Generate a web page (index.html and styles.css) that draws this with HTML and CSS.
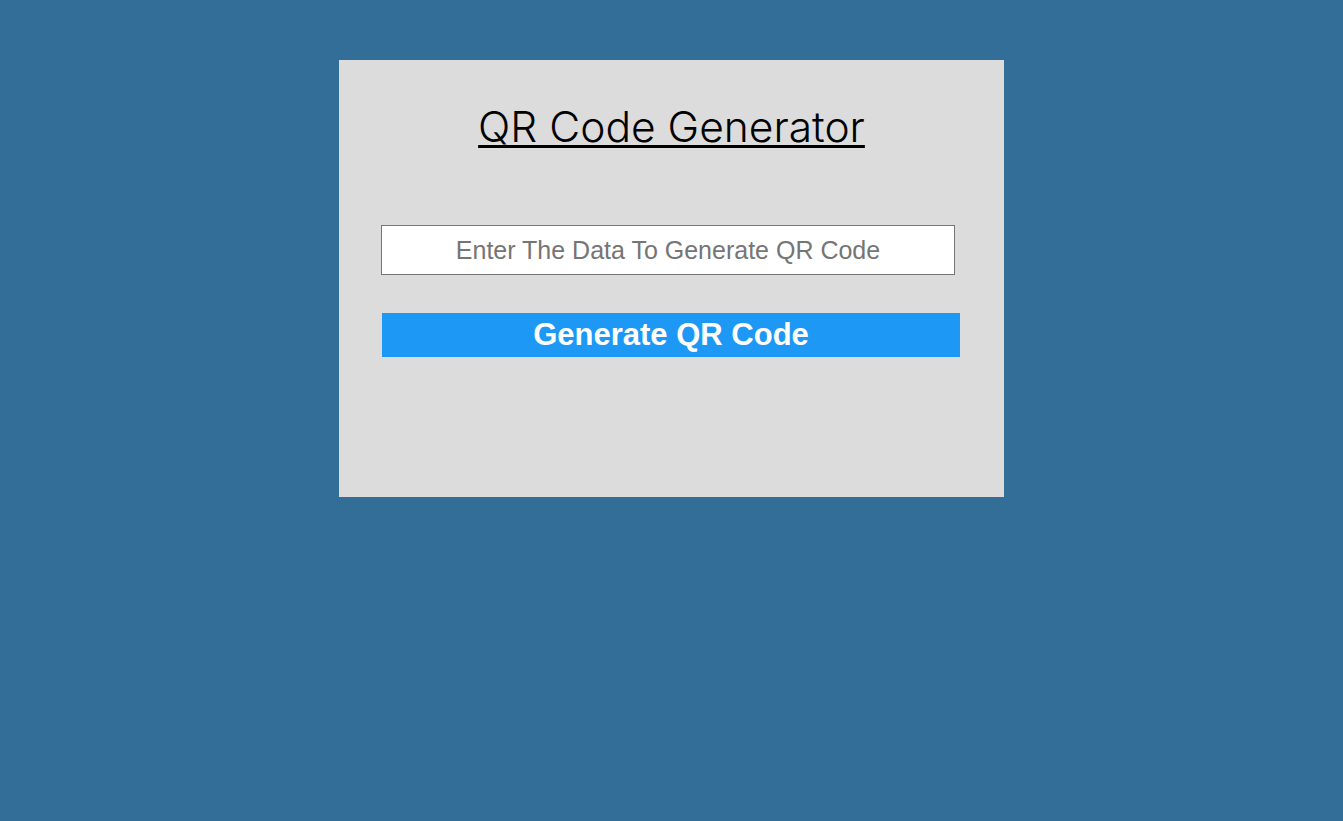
FILE: index.html
```html
<!DOCTYPE html>
<html>
<head>
<meta charset="utf-8">
<title>QR Code Generator</title>
<link rel="stylesheet" href="styles.css">
</head>
<body>
<div class="card">
  <h1 class="title">QR Code Generator</h1>
  <input class="data-input" type="text" placeholder="Enter The Data To Generate QR Code">
  <button class="gen-btn">Generate QR Code</button>
</div>
</body>
</html>
```
FILE: styles.css
```css
html, body {
  margin: 0;
  padding: 0;
  background: #336e99;
  height: 100%;
}
body {
  display: flex;
  flex-direction: column;
  align-items: center;
  padding-top: 60px;
  box-sizing: border-box;
}
.card {
  width: 665px;
  height: 437px;
  background: #dcdcdc;
  box-sizing: border-box;
  padding: 0 0 0 42px;
  display: flex;
  flex-direction: column;
}
.title {
  margin: 39px 0 0 -42px;
  width: 665px;
  text-align: center;
  font-family: "Inter", "Open Sans", sans-serif;
  font-weight: 300;
  font-size: 42.5px;
  line-height: 56px;
  color: #000;
  text-decoration: underline;
  text-decoration-thickness: 3px;
  text-underline-offset: 3px;
}
.data-input {
  margin-top: 70px;
  width: 574px;
  height: 50px;
  box-sizing: border-box;
  border: 1px solid #767676;
  background: #fff;
  font-family: "Liberation Sans", Arial, sans-serif;
  font-size: 25px;
  text-align: center;
  padding: 0;
  outline: none;
}
.data-input::placeholder {
  color: #757575;
}
.gen-btn {
  margin-top: 38px;
  margin-left: 1px;
  width: 578px;
  height: 44px;
  border: none;
  background: #1e98f5;
  color: #fff;
  font-family: "Liberation Sans", Arial, sans-serif;
  font-weight: bold;
  font-size: 31px;
  padding: 0;
  cursor: pointer;
}
```
